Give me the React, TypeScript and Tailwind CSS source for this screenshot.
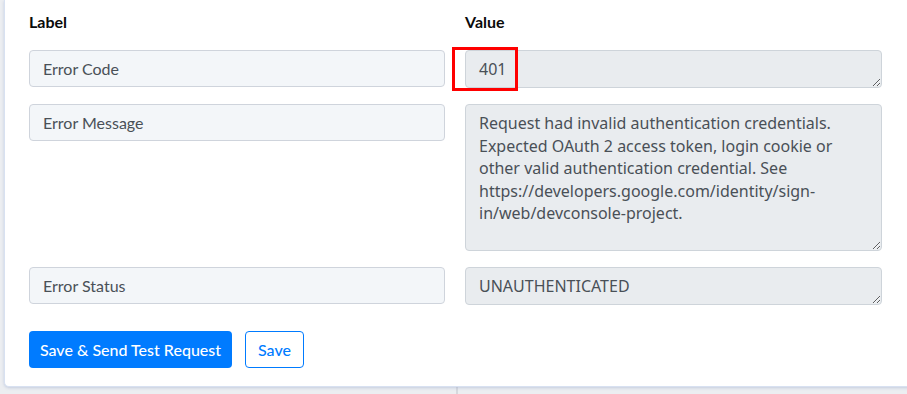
import React from "react";

const lato = { fontFamily: "Lato, 'Noto Sans', sans-serif" };

function LabelBox({ text }: { text: string }) {
  return (
    <div
      className="h-[37px] w-full rounded-[4px] border border-[#cfd4dc] bg-[#f3f6f9] px-[13px] flex items-center text-[16px] text-[#495057]"
      style={lato}
    >
      {text}
    </div>
  );
}

function ValueBox({ value, h }: { value: string; h: string }) {
  return (
    <textarea
      readOnly
      value={value}
      className={`${h} block w-full rounded-[4px] border border-[#ced4da] bg-[#e9ecef] px-[13px] pt-[7px] text-[16px] leading-[22.5px] text-[#495057] outline-none overflow-hidden`}
      style={{ fontFamily: "'Noto Sans', 'Open Sans', sans-serif" }}
    />
  );
}

export default function App() {
  return (
    <div className="w-[907px] h-[394px] overflow-hidden bg-[#eceef1] relative">
      <div className="absolute left-[456px] top-0 bottom-0 w-[2px] bg-[#d6d9de]" />
      <div className="relative ml-[4px] w-[920px] h-[387px] bg-white rounded-bl-[5px] border-l border-b border-[#d8e1f1] shadow-[0_1px_3px_rgba(120,140,190,0.35)]">
        <div className="pl-[24px] w-[903px]">
          <div className="grid grid-cols-[416px_417px] gap-x-[20px] h-[50px] pt-[10px] text-[16px] font-bold text-[#0a0a0a]" style={lato}>
            <div>Label</div>
            <div>Value</div>
          </div>
          <div className="grid grid-cols-[416px_417px] gap-x-[20px] gap-y-[16px]">
            <LabelBox text="Error Code" />
            <div className="relative">
              <ValueBox value="401" h="h-[38px]" />
              <div className="absolute left-[-13px] top-[-3px] w-[66px] h-[44px] border-[3px] border-[#ff0000]" />
            </div>
            <div>
              <LabelBox text="Error Message" />
            </div>
            <ValueBox
              value={
                "Request had invalid authentication credentials.\nExpected OAuth 2 access token, login cookie or\nother valid authentication credential. See\nhttps://developers.google.com/identity/sign-\nin/web/devconsole-project."
              }
              h="h-[147px]"
            />
            <LabelBox text="Error Status" />
            <ValueBox value="UNAUTHENTICATED" h="h-[38px]" />
          </div>
          <div className="mt-[26px] flex gap-[13px]" style={lato}>
            <button className="h-[37px] w-[203px] rounded-[4px] bg-[#007bff] text-white text-[16px] font-medium">
              Save &amp; Send Test Request
            </button>
            <button className="h-[37px] w-[59px] rounded-[4px] border border-[#007bff] bg-white text-[#007bff] text-[16px] font-medium">
              Save
            </button>
          </div>
        </div>
      </div>
    </div>
  );
}
